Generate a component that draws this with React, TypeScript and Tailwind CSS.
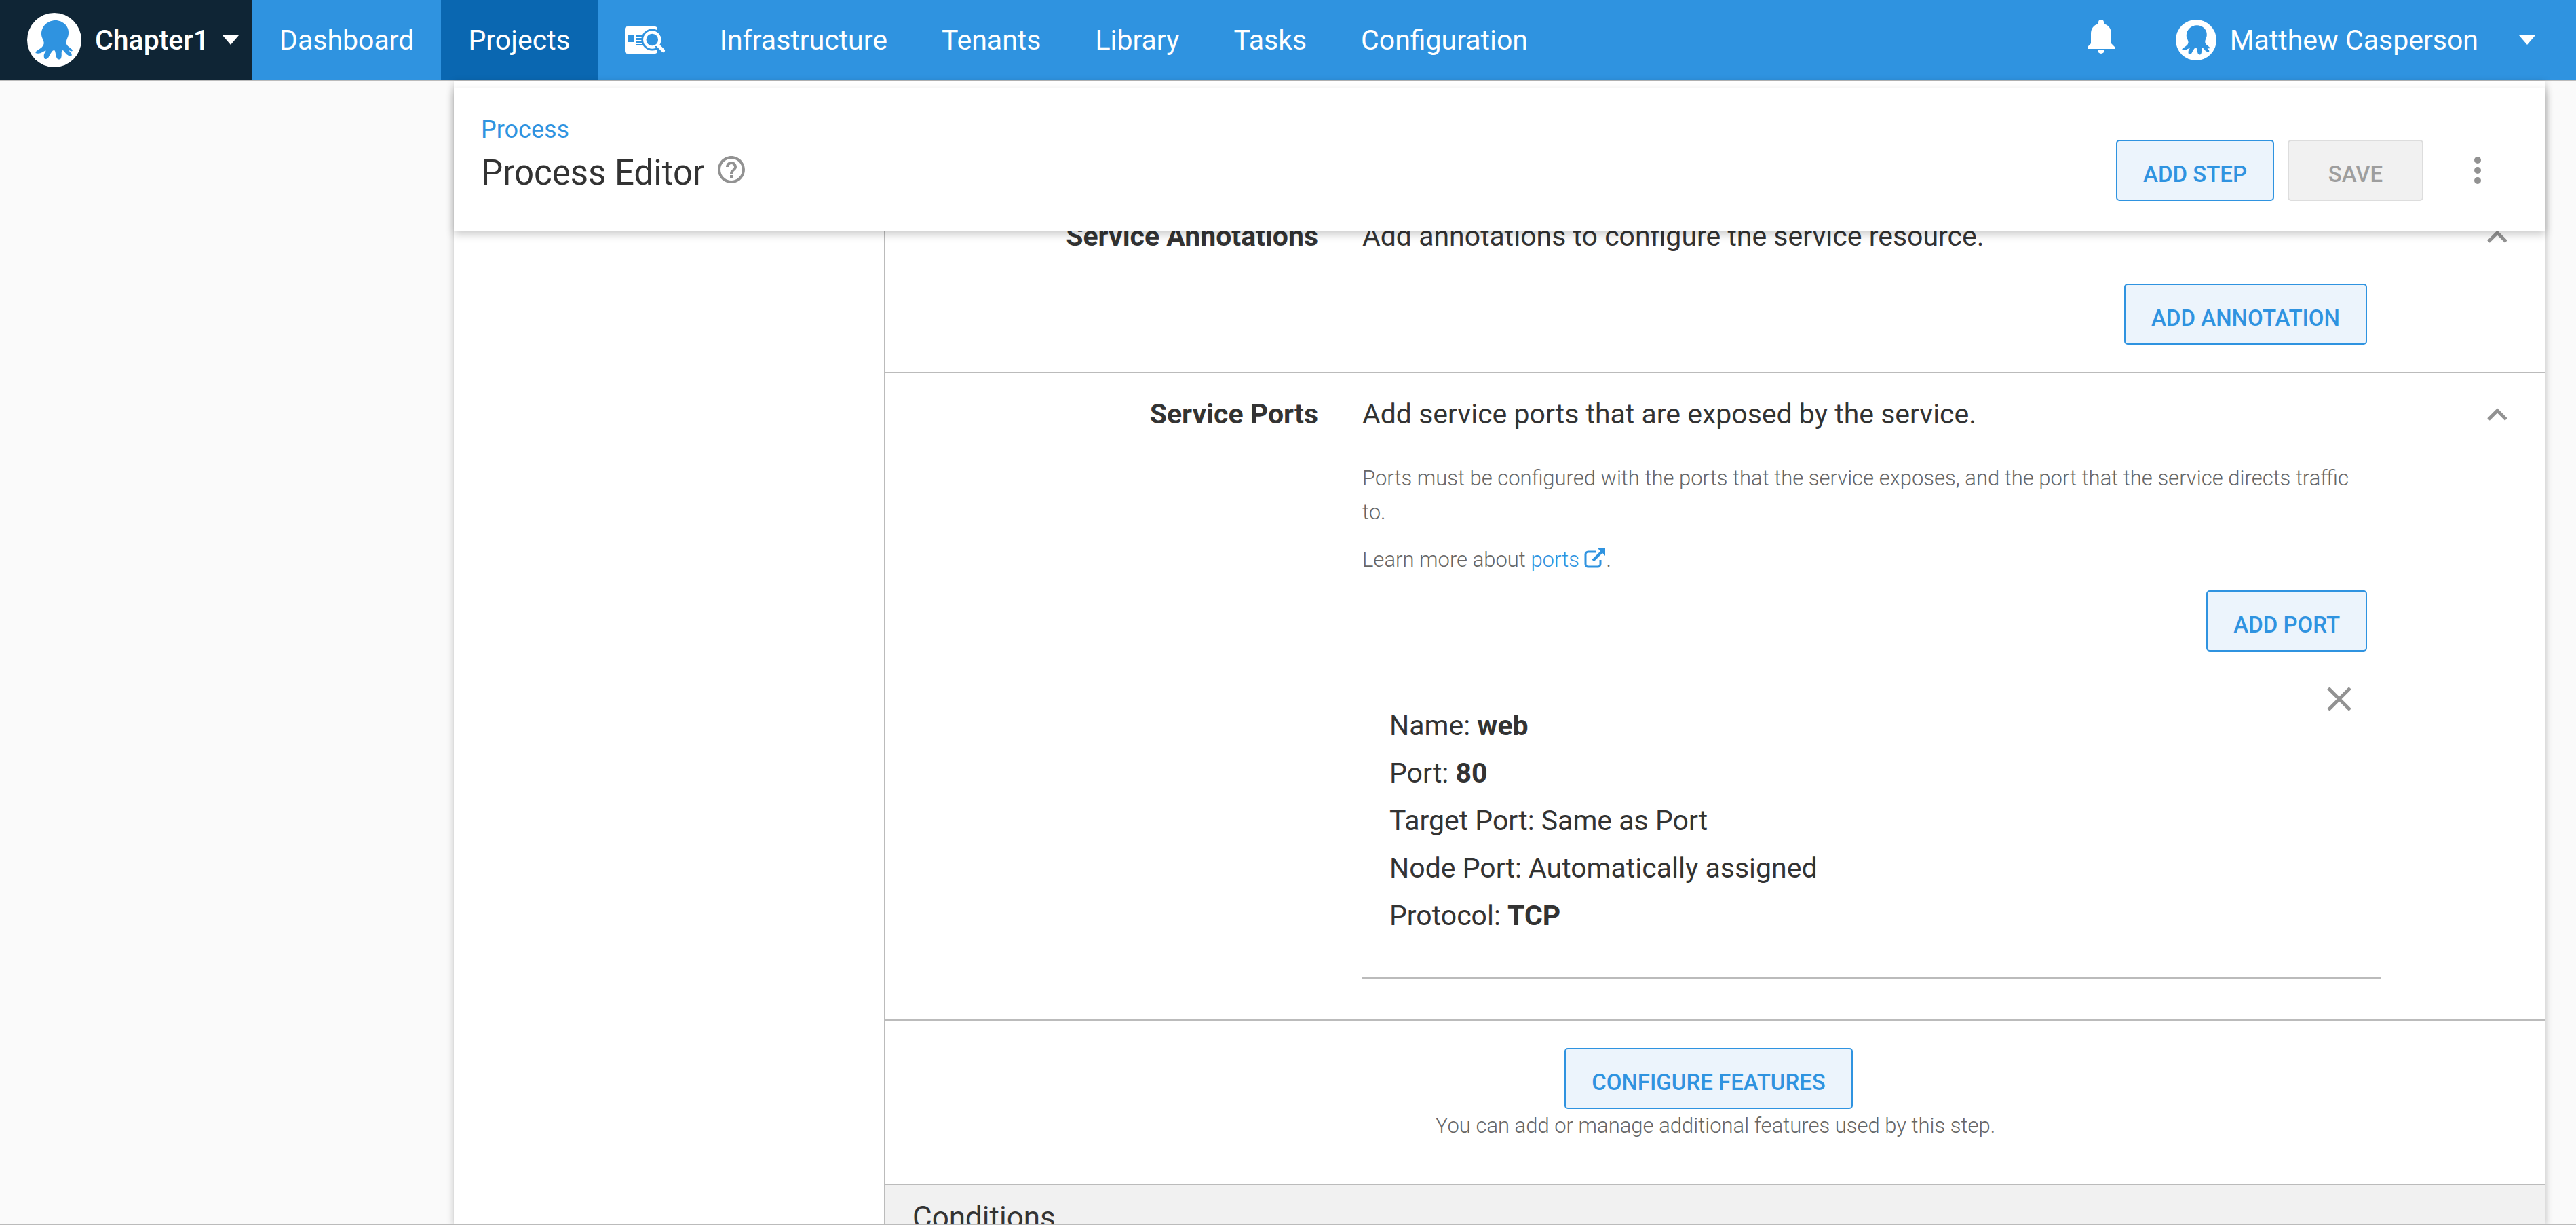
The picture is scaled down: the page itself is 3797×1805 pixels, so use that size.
const btn = "h-[90px] shrink-0 rounded-[5px] border-2 border-[#2f93e0] bg-[#ecf4fc] px-[38px] pt-3 text-[33px] leading-[40px] font-medium text-[#2f93e0]";

const navItem = "flex items-center px-10";

function Octopus({ size }: { size: string }) {
  return (
    <svg className={size} viewBox="0 0 80 80" aria-hidden="true">
      <circle cx="40" cy="40" r="40" fill="#fff" />
      <path
        fill="#2f93e0"
        d="M41.700 11C30 11 21 20 21 31c0 6 4 9 3.700 14-1 6-7 8-11.700 12-2 3 2 3 5 2.500 4-.7 8-4 9.700-4-1 3-3 4-3 8 0 3 1 5 3 4.500 3 0 4-3 5-5 2-3 4-8 7-8 2 0 2 5 3 8 .5 4 2 5.500 4.500 5.500s3-2 3.500-5c.5-3-1-8 2-8.500 2 1 4 5 7 7 3 2 6 2 6 0 .5-3-3-4-4-7 2 1 4 2 5 1 1-2-4-5-6.500-7-2-2-2.500-4-2.500-5 0-6 3.300-8 3.300-14C62 20 53 11 41.700 11Z"
      />
    </svg>
  );
}

function Caret() {
  return (
    <svg className="h-3.5 w-6" viewBox="0 0 24 14" aria-hidden="true">
      <path fill="#fff" d="M0 0h24L12 14z" />
    </svg>
  );
}

function Chevron({ label }: { label: string }) {
  return (
    <button type="button" aria-label={label} className="mr-14 grid h-[60px] w-[30px] place-items-center">
      <svg className="h-5 w-[30px]" viewBox="0 0 30 20" aria-hidden="true">
        <path d="M2 18 15 5l13 13" fill="none" stroke="#929292" strokeWidth="5" />
      </svg>
    </button>
  );
}

export default function App() {
  return (
    <div className="flex h-screen flex-col overflow-hidden border-b border-[#bbb] bg-[#fafafa] font-['Roboto',sans-serif] text-[41px] leading-[60px] text-[#333]">
      <nav className="flex h-[120px] shrink-0 border-b-2 border-[#bbb] bg-[#2f93e0] text-white">
        <button type="button" className="flex items-center bg-[#0f2535] pr-5 pl-10 font-medium">
          <Octopus size="size-20" />
          <span className="mx-5">Chapter1</span>
          <Caret />
        </button>
        <a href="#dashboard" className={navItem}>Dashboard</a>
        <a href="#projects" className="flex items-center bg-[#0a67b1] px-10">Projects</a>
        <a href="#search" aria-label="Search" className={navItem}>
          <svg className="h-10 w-[60px]" viewBox="0 0 60 40" aria-hidden="true">
            <rect width="48" height="40" rx="4" fill="#fff" />
            <path fill="#2f93e0" d="M4 13h10v10H4zM17 13h9v2h-9zM17 17h9v3h-9zM17 22h9v2h-9zM17 26h9v1.500h-9z" />
            <circle cx="40.300" cy="19.500" r="16" fill="#2f93e0" />
            <circle cx="40.300" cy="19.500" r="11" fill="none" stroke="#fff" strokeWidth="4.500" />
            <path d="M44 29h6v5h-2z" fill="#2f93e0" />
            <path d="m49 28 7.500 7.500" stroke="#fff" strokeWidth="5" strokeLinecap="round" />
          </svg>
        </a>
        <a href="#infrastructure" className={navItem}>Infrastructure</a>
        <a href="#tenants" className={navItem}>Tenants</a>
        <a href="#library" className={navItem}>Library</a>
        <a href="#tasks" className={navItem}>Tasks</a>
        <a href="#configuration" className={navItem}>Configuration</a>
        <div className="ml-auto flex items-center">
          <button type="button" aria-label="Notifications" className="mr-[90px] pb-2">
            <svg className="h-[50px] w-10" viewBox="0 0 40 50" aria-hidden="true">
              <path fill="#fff" d="M0 42v-3l5-5V20C5 12 9 7 16 5V3a4 4 0 0 1 8 0v2c7 2 11 7 11 15v14l5 5v3zM15 44h10a5 5 0 0 1-10 0z" />
            </svg>
          </button>
          <button type="button" className="flex items-center pr-[60px]">
            <Octopus size="size-[60px]" />
            <span className="mr-[60px] ml-5">Matthew Casperson</span>
            <Caret />
          </button>
        </div>
      </nav>

      <div className="mr-[45px] ml-[669px] flex min-h-0 flex-1 flex-col bg-white pt-2.5 shadow-[0_2px_10px_rgba(0,0,0,0.25)]">
        <header className="relative z-10 flex h-[210px] shrink-0 items-start bg-white pl-10 shadow-[0_5px_12px_rgba(0,0,0,0.22)]">
          <div className="pt-9">
            <a href="#process" className="block text-[36px] leading-[50px] text-[#2f93e0]">Process</a>
            <div className="mt-1 flex">
              <h1 className="text-[51px] leading-[70px]">Process Editor</h1>
              <button type="button" aria-label="Help" className="mt-2.5 ml-5 size-10">
                <svg className="size-10" viewBox="2 2 20 20" aria-hidden="true">
                  <path fill="#929292" d="M11 18h2v-2h-2v2zm1-16C6.480 2 2 6.480 2 12s4.480 10 10 10 10-4.480 10-10S17.520 2 12 2zm0 18c-4.410 0-8-3.590-8-8s3.590-8 8-8 8 3.590 8 8-3.590 8-8 8zm0-14c-2.210 0-4 1.790-4 4h2c0-1.100.9-2 2-2s2 .9 2 2c0 2-3 1.750-3 5h2c0-2.250 3-2.500 3-5 0-2.210-1.790-4-4-4z" />
                </svg>
              </button>
            </div>
          </div>
          <div className="mt-[76px] ml-auto flex items-center gap-5 pr-[95px]">
            <button type="button" className={btn}>ADD STEP</button>
            <button type="button" disabled className="h-[90px] w-[200px] rounded-[5px] border-2 border-[#ddd] bg-[#f1f1f1] pt-3 text-[33px] leading-[40px] font-medium text-[#9e9e9e]">SAVE</button>
            <button type="button" aria-label="More actions" className="ml-[55px]">
              <svg className="h-10 w-2.5" viewBox="0 0 10 40" aria-hidden="true">
                <g fill="#929292"><circle cx="5" cy="5" r="5" /><circle cx="5" cy="20" r="5" /><circle cx="5" cy="35" r="5" /></g>
              </svg>
            </button>
          </div>
        </header>

        <main className="ml-[634px] flex min-h-0 flex-1 flex-col overflow-hidden border-l-2 border-[#bbb]">
          <section className="-mt-[22px] flex shrink-0 border-b-2 border-[#bbb] pb-10">
            <h2 className="w-[638px] shrink-0 text-right font-bold">Service Annotations</h2>
            <div className="ml-[65px] flex-1">
              <div className="flex justify-between">
                <p>Add annotations to configure the service resource.</p>
                <Chevron label="Collapse service annotations" />
              </div>
              <div className="mt-10 mr-[263px] flex justify-end">
                <button type="button" className={btn}>ADD ANNOTATION</button>
              </div>
            </div>
          </section>

          <section className="flex shrink-0 border-b-2 border-[#bbb] pt-[30px] pb-[60px]">
            <h2 className="w-[638px] shrink-0 text-right font-bold">Service Ports</h2>
            <div className="ml-[65px] flex-1">
              <div className="flex justify-between">
                <p>Add service ports that are exposed by the service.</p>
                <Chevron label="Collapse service ports" />
              </div>
              <div className="mt-10 mr-[263px] text-[31px] leading-[50px] font-light text-[#666]">
                <p>Ports must be configured with the ports that the service exposes, and the port that the service directs traffic to.</p>
                <p className="mt-5">
                  Learn more about{" "}
                  <a href="#ports" className="text-[#2f93e0]">
                    ports{" "}
                    <svg className="inline size-8 align-[-4px]" viewBox="0 0 32 32" aria-hidden="true">
                      <path d="M18 6H6a4 4 0 0 0-4 4v14a4 4 0 0 0 4 4h14a4 4 0 0 0 4-4v-6" fill="none" stroke="#2f93e0" strokeWidth="3" />
                      <path d="m13 19L28 4" stroke="#2f93e0" strokeWidth="4" />
                      <path d="M20 1h11v11z" fill="#2f93e0" />
                    </svg>
                  </a>.
                </p>
              </div>
              <div className="mt-5 mr-[263px] flex justify-end">
                <button type="button" className={btn}>ADD PORT</button>
              </div>
              <div className="mt-10 mr-[243px] flex justify-between border-b-2 border-[#bbb] pb-14 pl-10">
                <ul className="pt-[34px] leading-[70px]">
                  <li>Name: <b>web</b></li>
                  <li>Port: <b>80</b></li>
                  <li>Target Port: Same as Port</li>
                  <li>Node Port: Automatically assigned</li>
                  <li>Protocol: <b>TCP</b></li>
                </ul>
                <button type="button" aria-label="Remove port" className="mt-3 mr-[43px] h-9 w-9">
                  <svg className="size-9" viewBox="0 0 36 36" aria-hidden="true">
                    <path d="m2 2 32 32M34 2 2 34" stroke="#929292" strokeWidth="5" />
                  </svg>
                </button>
              </div>
            </div>
          </section>

          <section className="flex h-[242px] shrink-0 flex-col items-center border-b-2 border-[#bbb] pt-10">
            <button type="button" className={btn + " mr-5"}>CONFIGURE FEATURES</button>
            <p className="text-[31px] leading-[50px] font-light text-[#666]">You can add or manage additional features used by this step.</p>
          </section>

          <section className="h-[100px] shrink-0 bg-[#f1f1f1] px-10 pt-[18px]">
            <h2 className="text-[44px] leading-[60px]">Conditions</h2>
          </section>
        </main>
      </div>
    </div>
  );
}
